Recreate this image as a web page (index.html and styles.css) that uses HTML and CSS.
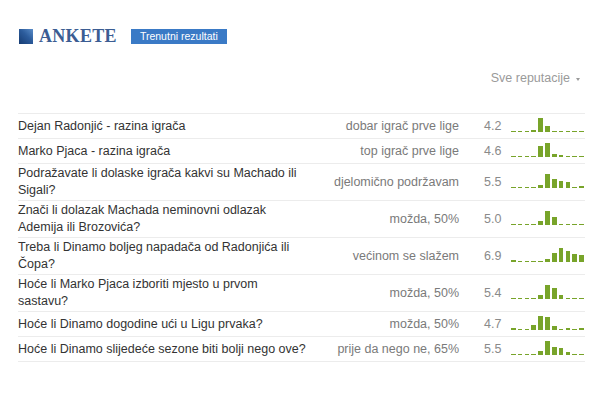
FILE: index.html
```html
<!DOCTYPE html>
<html lang="hr">
<head>
<meta charset="utf-8">
<title>Ankete</title>
<link rel="stylesheet" href="styles.css">
</head>
<body>
<div class="page">
  <div class="header">
    <span class="logo-square"></span>
    <h1 class="title">ANKETE</h1>
    <span class="tab">Trenutni rezultati</span>
  </div>
  <div class="toolbar">
    <span class="filter">Sve reputacije</span>
    <span class="caret"></span>
  </div>
  <div class="table">
    <div class="row">
      <div class="q">Dejan Radonjić - razina igrača</div>
      <div class="a">dobar igrač prve lige</div>
      <div class="n">4.2</div>
      <div class="chart"><i style="height:1px"></i><i style="height:1px"></i><i style="height:1px"></i><i style="height:2px"></i><i style="height:14px"></i><i style="height:6px"></i><i style="height:1px"></i><i style="height:1px"></i><i style="height:1px"></i><i style="height:1px"></i><i style="height:1px"></i></div>
    </div>
    <div class="row">
      <div class="q">Marko Pjaca - razina igrača</div>
      <div class="a">top igrač prve lige</div>
      <div class="n">4.6</div>
      <div class="chart"><i style="height:1px"></i><i style="height:1px"></i><i style="height:1px"></i><i style="height:1px"></i><i style="height:11px"></i><i style="height:14px"></i><i style="height:3px"></i><i style="height:2px"></i><i style="height:1px"></i><i style="height:1px"></i><i style="height:1px"></i></div>
    </div>
    <div class="row">
      <div class="q">Podražavate li dolaske igrača kakvi su Machado ili Sigali?</div>
      <div class="a">djelomično podržavam</div>
      <div class="n">5.5</div>
      <div class="chart"><i style="height:1px"></i><i style="height:1px"></i><i style="height:1px"></i><i style="height:1px"></i><i style="height:3px"></i><i style="height:14px"></i><i style="height:9px"></i><i style="height:7px"></i><i style="height:6px"></i><i style="height:1px"></i><i style="height:2px"></i></div>
    </div>
    <div class="row">
      <div class="q">Znači li dolazak Machada neminovni odlazak Ademija ili Brozovića?</div>
      <div class="a">možda, 50%</div>
      <div class="n">5.0</div>
      <div class="chart"><i style="height:1px"></i><i style="height:1px"></i><i style="height:1px"></i><i style="height:1px"></i><i style="height:4px"></i><i style="height:14px"></i><i style="height:8px"></i><i style="height:1px"></i><i style="height:1px"></i><i style="height:1px"></i><i style="height:1px"></i></div>
    </div>
    <div class="row">
      <div class="q">Treba li Dinamo boljeg napadača od Radonjića ili Čopa?</div>
      <div class="a">većinom se slažem</div>
      <div class="n">6.9</div>
      <div class="chart"><i style="height:2px"></i><i style="height:1px"></i><i style="height:1px"></i><i style="height:1px"></i><i style="height:1px"></i><i style="height:3px"></i><i style="height:9px"></i><i style="height:14px"></i><i style="height:11px"></i><i style="height:8px"></i><i style="height:7px"></i></div>
    </div>
    <div class="row">
      <div class="q">Hoće li Marko Pjaca izboriti mjesto u prvom sastavu?</div>
      <div class="a">možda, 50%</div>
      <div class="n">5.4</div>
      <div class="chart"><i style="height:1px"></i><i style="height:1px"></i><i style="height:1px"></i><i style="height:1px"></i><i style="height:4px"></i><i style="height:14px"></i><i style="height:11px"></i><i style="height:4px"></i><i style="height:1px"></i><i style="height:1px"></i><i style="height:1px"></i></div>
    </div>
    <div class="row">
      <div class="q">Hoće li Dinamo dogodine ući u Ligu prvaka?</div>
      <div class="a">možda, 50%</div>
      <div class="n">4.7</div>
      <div class="chart"><i style="height:2px"></i><i style="height:1px"></i><i style="height:1px"></i><i style="height:5px"></i><i style="height:14px"></i><i style="height:13px"></i><i style="height:4px"></i><i style="height:1px"></i><i style="height:2px"></i><i style="height:1px"></i><i style="height:2px"></i></div>
    </div>
    <div class="row">
      <div class="q">Hoće li Dinamo slijedeće sezone biti bolji nego ove?</div>
      <div class="a">prije da nego ne, 65%</div>
      <div class="n">5.5</div>
      <div class="chart"><i style="height:1px"></i><i style="height:1px"></i><i style="height:1px"></i><i style="height:1px"></i><i style="height:4px"></i><i style="height:14px"></i><i style="height:8px"></i><i style="height:7px"></i><i style="height:3px"></i><i style="height:1px"></i><i style="height:1px"></i></div>
    </div>
  </div>
</div>
</body>
</html>
```
FILE: styles.css
```css
html, body {
  margin: 0;
  padding: 0;
  background: #ffffff;
}

body {
  font-family: "Liberation Sans", Arial, sans-serif;
  font-size: 12.5px;
  color: #333333;
}

.page {
  padding: 29px 15px 0 18px;
}

.header {
  display: flex;
  align-items: center;
  height: 15px;
}

.logo-square {
  width: 14px;
  height: 15px;
  margin-left: 1px;
  background: linear-gradient(45deg, #163c72 0%, #2c5c9c 55%, #5a8dc9 100%);
}

.title {
  margin: 0 0 0 6px;
  font-family: "Liberation Serif", "Times New Roman", serif;
  font-weight: bold;
  font-size: 18px;
  line-height: 15px;
  color: #3b5d93;
  letter-spacing: 0.3px;
}

.tab {
  margin-left: 14px;
  height: 15px;
  width: 96px;
  display: flex;
  align-items: center;
  justify-content: center;
  background: #3a7ac6;
  color: #ffffff;
  font-size: 10.5px;
  line-height: 15px;
}

.toolbar {
  display: flex;
  justify-content: flex-end;
  align-items: center;
  margin-top: 27px;
  padding-right: 5px;
  height: 14px;
  color: #9a9a9a;
}

.filter {
  line-height: 14px;
}

.caret {
  width: 0;
  height: 0;
  margin-left: 6px;
  margin-top: 2px;
  border-left: 2.5px solid transparent;
  border-right: 2.5px solid transparent;
  border-top: 3px solid #9a9a9a;
}

.table {
  margin-top: 28px;
  width: 567px;
  border-top: 1px solid #ececec;
}

.row {
  display: grid;
  grid-template-columns: 290px 1fr 52px 73px;
  padding-right: 1px;
  align-items: center;
  min-height: 24px;
  border-bottom: 1px solid #ececec;
  line-height: 17px;
}

.q {
  padding: 1px 0;
  color: #333333;
}

.a {
  text-align: right;
  color: #7a7a7a;
  white-space: nowrap;
}

.n {
  padding-left: 25px;
  color: #8a8a8a;
}

.chart {
  display: flex;
  align-items: flex-end;
  justify-content: space-between;
  height: 14px;
  margin-top: -3px;
}

.chart i {
  display: block;
  width: 4.6px;
  background: #78a42a;
}
```
